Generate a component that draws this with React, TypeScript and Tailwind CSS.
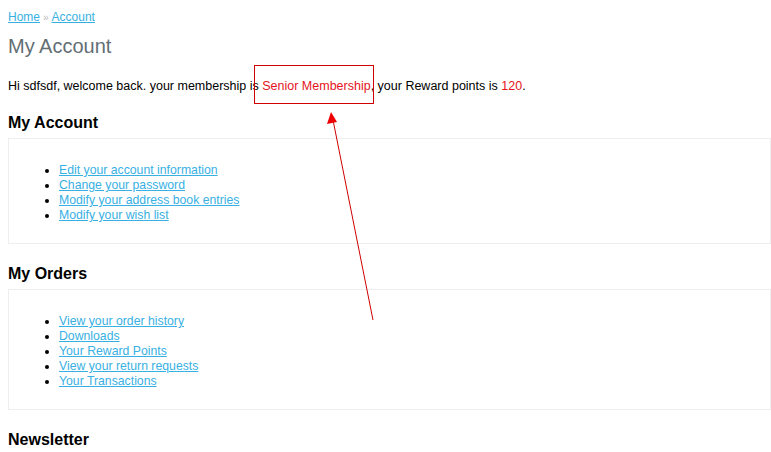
import React from 'react'

const accountLinks = [
  'Edit your account information',
  'Change your password',
  'Modify your address book entries',
  'Modify your wish list',
]

const orderLinks = [
  'View your order history',
  'Downloads',
  'Your Reward Points',
  'View your return requests',
  'Your Transactions',
]

function LinkBox({ links }: { links: string[] }) {
  return (
    <div className="border border-[#eeeeee] p-[10px] mb-[20px]">
      <ul className="list-disc pl-[40px] mt-[14px] mb-[10px] leading-[15px] text-[12.25px]">
        {links.map((l) => (
          <li key={l}>
            <a href="#" className="text-[#38b0e3] underline">{l}</a>
          </li>
        ))}
      </ul>
    </div>
  )
}

export default function App() {
  return (
    <div className="relative min-h-[452px] bg-white pl-[8px] pt-[10px] text-[12px] leading-[15px] text-black font-['Liberation_Sans',Arial,sans-serif]">
      {/* Breadcrumb */}
      <div className="flex items-center">
        <a href="#" className="text-[#38b0e3] underline">Home</a>
        <span className="text-[#bbbbbb] text-[10px] mx-[3px]">»</span>
        <a href="#" className="text-[#38b0e3] underline">Account</a>
      </div>

      <h1 className="mt-[9px] text-[20px] leading-[24px] text-[#636e75]">My Account</h1>

      <p className="mt-[21px] mb-[20px] text-[12.5px]">
        Hi sdfsdf, welcome back. your membership is{' '}
        <span className="text-[#e5131d]">Senior Membership</span>, your Reward points is{' '}
        <span className="text-[#e5131d]">120</span>.
      </p>

      <h2 className="text-[16px] leading-[18px] font-bold mb-[6px]">My Account</h2>
      <LinkBox links={accountLinks} />

      <h2 className="text-[16px] leading-[18px] font-bold pt-[1px] mb-[6px]">My Orders</h2>
      <LinkBox links={orderLinks} />

      <h2 className="text-[16px] leading-[18px] font-bold pt-[1px]">Newsletter</h2>

      {/* Annotation overlay */}
      <div className="absolute left-[254px] top-[65px] w-[120px] h-[39px] border border-[#d00000]" />
      <svg className="absolute left-0 top-0 pointer-events-none" width="771" height="452">
        <line x1="373" y1="320" x2="333" y2="120" stroke="#d00000" strokeWidth="1" />
        <polygon points="331,112 327,124 337,122" fill="#ee0000" />
      </svg>
    </div>
  )
}
